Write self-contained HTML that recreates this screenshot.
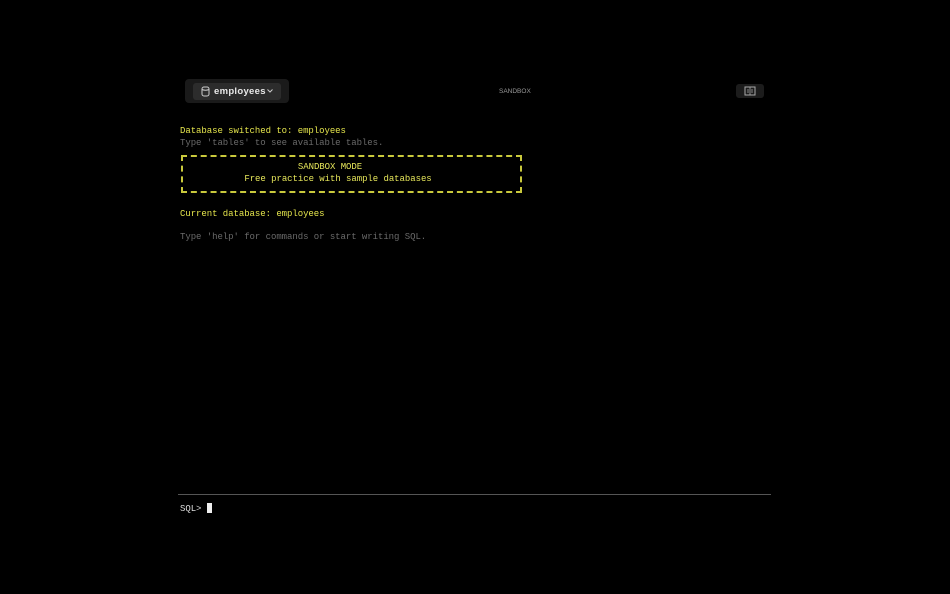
<!DOCTYPE html>
<html><head><style>
html,body{margin:0;padding:0;background:#000;width:950px;height:594px;overflow:hidden;position:relative}
.m{font-family:"Liberation Mono",monospace;font-size:9px;position:absolute;white-space:pre;line-height:12px;letter-spacing:-0.05px}
.y{color:#e4e44c}.g{color:#6a6a6a}
</style></head><body>
<div style="position:absolute;left:185px;top:79px;width:104px;height:24px;background:#1a1a1a;border-radius:4px"></div>
<div style="position:absolute;left:193px;top:83px;width:88px;height:17px;background:#2c2c2c;border-radius:3px"></div>
<svg style="position:absolute;left:201px;top:86px" width="9" height="11" viewBox="0 0 9 11"><rect x="1" y="1" width="7" height="9" rx="2" fill="none" stroke="#ccc" stroke-width="1"/><path d="M1 3.5Q4.5 5 8 3.5" fill="none" stroke="#ccc"/></svg>
<div style="position:absolute;left:214px;top:86px;font:bold 9.5px 'Liberation Sans',sans-serif;color:#e8e8e8;line-height:12px;letter-spacing:0.3px">employees</div>
<svg style="position:absolute;left:266px;top:88px" width="8" height="6" viewBox="0 0 8 6"><path d="M1.5 1.5L4 4L6.5 1.5" fill="none" stroke="#ccc" stroke-width="1"/></svg>
<div style="position:absolute;left:499px;top:88px;font:6.5px 'Liberation Sans',sans-serif;color:#999">SANDBOX</div>
<div style="position:absolute;left:736px;top:84px;width:28px;height:14px;background:#1c1c1c;border-radius:3px"></div>
<svg style="position:absolute;left:744px;top:86px" width="12" height="10" viewBox="0 0 12 10"><rect x="1" y="1" width="10" height="8" fill="none" stroke="#aaa"/><path d="M6 1V9M3 4H5M3 6H5M7 4H9M7 6H9" stroke="#aaa" stroke-width=".8"/></svg>
<div class="m y" style="left:180px;top:125px">Database switched to: employees</div>
<div class="m g" style="left:180px;top:137px">Type 'tables' to see available tables.</div>
<div style="position:absolute;left:181px;top:155px;width:337px;height:34px;border:2px dashed #c9c93c"></div>
<div class="m y" style="left:183px;top:161px;width:294px;text-align:center;color:#e6e65a">SANDBOX MODE</div>
<div class="m y" style="left:183px;top:173px;width:310px;text-align:center;color:#e6e65a">Free practice with sample databases</div>
<div class="m y" style="left:180px;top:208px">Current database: employees</div>
<div class="m g" style="left:180px;top:231px">Type 'help' for commands or start writing SQL.</div>
<div style="position:absolute;left:178px;top:494px;width:593px;height:1px;background:#555"></div>
<div class="m" style="left:180px;top:503px;color:#ddd">SQL></div>
<div style="position:absolute;left:207px;top:503px;width:5px;height:10px;background:#eee"></div>
</body></html>
